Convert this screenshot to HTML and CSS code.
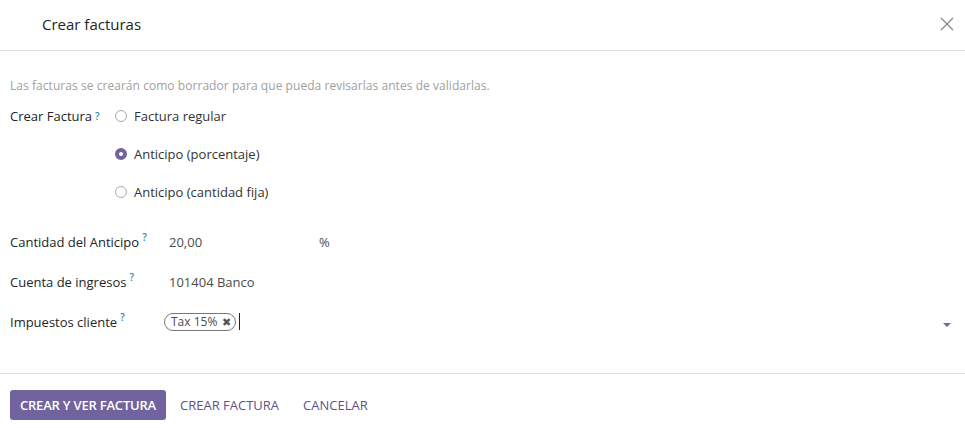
FILE: index.html
```html
<!DOCTYPE html>
<html lang="es">
<head>
    <meta charset="UTF-8">
    <meta name="viewport" content="width=device-width, initial-scale=1.0">
    <title>Crear facturas</title>
    <link rel="stylesheet" href="styles.css">
</head>
<body>
    <div class="modal">
        <div class="modal-header">
            <h4 class="modal-title">Crear facturas</h4>
            <button class="close" type="button" aria-label="Cerrar">
                <svg width="14" height="14" viewBox="0 0 14 14">
                    <path d="M1 1 L13 13 M13 1 L1 13" stroke="#8a8a8a" stroke-width="1.4" fill="none"/>
                </svg>
            </button>
        </div>

        <div class="modal-body">
            <p class="note">Las facturas se crearán como borrador para que pueda revisarlas antes de validarlas.</p>

            <div class="method">
                <div class="method-label">Crear Factura<sup>?</sup></div>
                <div class="radios">
                    <label class="radio"><span class="dot"></span>Factura regular</label>
                    <label class="radio"><span class="dot checked"></span>Anticipo (porcentaje)</label>
                    <label class="radio"><span class="dot"></span>Anticipo (cantidad fija)</label>
                </div>
            </div>

            <div class="fields">
                <div class="field">
                    <div class="field-label">Cantidad del Anticipo<sup>?</sup></div>
                    <div class="field-value">
                        <span class="amount">20,00</span>
                        <span class="unit">%</span>
                    </div>
                </div>
                <div class="field">
                    <div class="field-label">Cuenta de ingresos<sup>?</sup></div>
                    <div class="field-value">101404 Banco</div>
                </div>
                <div class="field">
                    <div class="field-label">Impuestos cliente<sup>?</sup></div>
                    <div class="field-value many2many">
                        <span class="tag">Tax 15% <span class="tag-remove">&#10006;</span></span>
                        <span class="caret-input"></span>
                        <span class="dropdown"></span>
                    </div>
                </div>
            </div>
        </div>

        <div class="modal-footer">
            <button class="btn btn-primary" type="button">Crear y ver factura</button>
            <button class="btn btn-link" type="button">Crear factura</button>
            <button class="btn btn-link" type="button">Cancelar</button>
        </div>
    </div>
</body>
</html>
```

FILE: styles.css
```css
body {
    margin: 0;
    font-family: 'Open Sans', 'Liberation Sans', sans-serif;
    font-size: 13px;
    color: #333333;
    background: #FFFFFF;
}

.modal {
    width: 965px;
}

.modal-header {
    height: 51px;
    box-sizing: border-box;
    display: flex;
    align-items: center;
    justify-content: space-between;
    padding: 0 8px 3px 42px;
    border-bottom: 1px solid #DEDEE6;
}

.modal-title {
    margin: 0;
    font-size: 15px;
    font-weight: normal;
    color: #212529;
}

.close {
    border: none;
    background: none;
    padding: 0;
    width: 16px;
    height: 16px;
    display: flex;
    align-items: center;
    justify-content: center;
    margin-right: 2px;
}

.modal-body {
    padding: 26px 10px 32px 10px;
}

.note {
    margin: 0 0 2px 0;
    font-size: 12px;
    line-height: 18px;
    color: #A0A0A0;
    letter-spacing: 0.05px;
}

sup {
    color: #1A8FB5;
    font-size: 10px;
    font-weight: 600;
    margin-left: 3px;
    vertical-align: 6px;
    line-height: 0;
}

.method {
    display: flex;
    margin-bottom: 11px;
}

.method-label {
    width: 105px;
    height: 38px;
    display: flex;
    align-items: center;
    color: #212529;
}

.radios {
    display: flex;
    flex-direction: column;
}

.radio {
    height: 38px;
    display: flex;
    align-items: center;
    gap: 7px;
    color: #333333;
}

.dot {
    width: 10px;
    height: 10px;
    border: 1px solid #A8A8A8;
    border-radius: 50%;
    box-sizing: content-box;
}

.dot.checked {
    width: 4px;
    height: 4px;
    border: 4px solid #71639E;
}

.field {
    display: flex;
    height: 40px;
    align-items: center;
}

.field:last-child {
    height: 39px;
}

.field-label {
    width: 159px;
    color: #212529;
}

.field-value {
    flex: 1;
    display: flex;
    align-items: center;
    color: #4C4C4C;
}

.amount {
    width: 150px;
}

.many2many {
    margin-left: -5px;
    position: relative;
}

.tag {
    display: inline-flex;
    align-items: center;
    height: 16px;
    padding: 0 4px 0 6px;
    border: 1px solid #777777;
    border-radius: 9px;
    font-size: 12px;
    color: #4C4C4C;
}

.tag-remove {
    font-size: 11px;
    margin-left: 5px;
    color: #555555;
}

.caret-input {
    width: 1px;
    height: 17px;
    margin-left: 3px;
    background: #222222;
}

.dropdown {
    position: absolute;
    right: 4px;
    top: 50%;
    margin-top: 1px;
    border-left: 4px solid transparent;
    border-right: 4px solid transparent;
    border-top: 4px solid #71639E;
}

.modal-footer {
    border-top: 1px solid #DEDEE6;
    padding: 16px 10px 8px 10px;
    display: flex;
    align-items: center;
}

.btn {
    font-family: inherit;
    font-size: 13px;
    text-transform: uppercase;
    white-space: nowrap;
    border: none;
    height: 30px;
    padding: 0 10px;
    border-radius: 3px;
    cursor: pointer;
}

.btn-primary {
    background: #71639E;
    color: #FFFFFF;
    font-weight: 600;
    width: 156px;
    padding: 0;
    letter-spacing: -0.2px;
}

.btn-link {
    background: none;
    color: #5E5289;
    margin-left: 4px;
}

.btn-link + .btn-link {
    margin-left: 4px;
}
```
